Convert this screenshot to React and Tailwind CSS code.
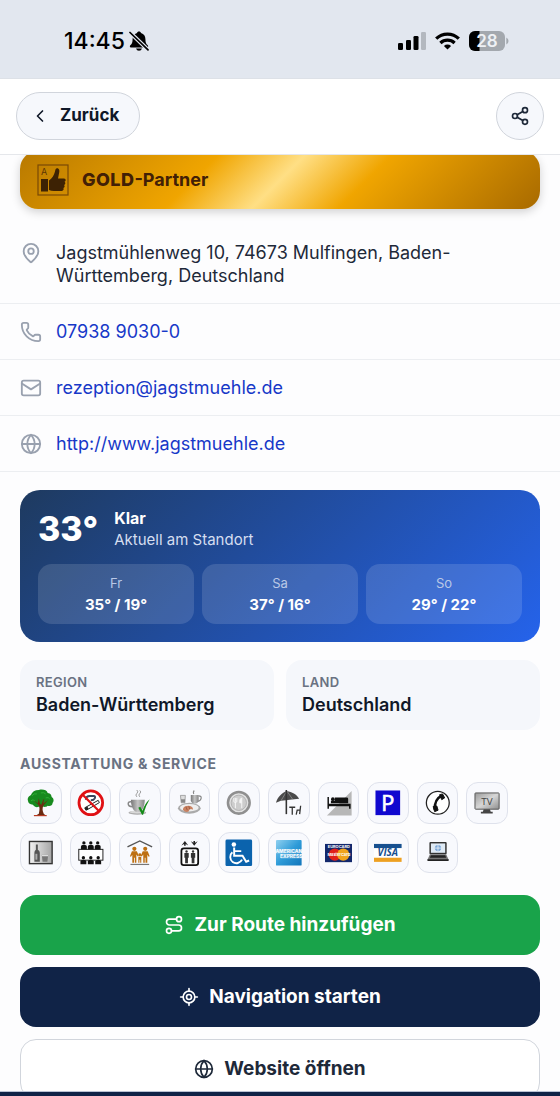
import React from 'react';
import { ChevronLeft, Globe, LocateFixed, MapPin, Phone, Route, Share2 } from 'lucide-react';

function MailIcon({ className }) {
  return (
    <svg viewBox="0 0 24 24" fill="none" stroke="currentColor" strokeWidth="2" strokeLinecap="round" strokeLinejoin="round" className={className} aria-hidden="true">
      <rect x="2" y="4" width="20" height="16" rx="2" />
      <path d="m22 7-10 6.5L2 7" />
    </svg>
  );
}

const contacts = [
  { icon: MapPin, text: 'Jagstmühlenweg 10, 74673 Mulfingen, Baden-Württemberg, Deutschland' },
  { icon: Phone, text: '07938 9030-0', href: 'tel:+49793890300' },
  { icon: MailIcon, text: 'rezeption@jagstmuehle.de', href: 'mailto:rezeption@jagstmuehle.de' },
  { icon: Globe, text: 'http://www.jagstmuehle.de', href: 'http://www.jagstmuehle.de' },
];

const forecast = [
  { day: 'Fr', temp: '35° / 19°' },
  { day: 'Sa', temp: '37° / 16°' },
  { day: 'So', temp: '29° / 22°' },
];

const facts = [
  { label: 'Region', value: 'Baden-Württemberg' },
  { label: 'Land', value: 'Deutschland' },
];

function Person({ x, y, color = '#111' }) {
  return (
    <g transform={`translate(${x} ${y})`} fill={color}>
      <circle cx="0" cy="0" r="1.7" />
      <path d="M-3 6.6V3.8Q-3 2.200 -1.4 2.200H1.4Q3 2.200 3 3.8V6.6Z" />
    </g>
  );
}

const amenities = [
  {
    name: 'Garten',
    art: (
      <>
        <path d="M1 12C0 9 2 7 4 6 5 3 8 1 12 1c4-1 8 0 9 3 3 0 4 3 4 4 3 2 2 5 1 6 0 3-3 4-5 3-2 2-5 1-7 0-3 2-6 2-8-1-3 0-5-2-5-4Z" fill="#178a1e" />
        <path d="M5 7q2-3 5-2M14 4q3-1 5 1M19 9q3-1 4 1M4 12q2-2 4 0" stroke="#2fae35" fill="none" />
        <path d="M12 25c1-4 1-7-.5-9L6 11l5 3.5 1-5 1.200 5.500 1.300 1 2-5 1-1-1 5 5-4-5 6c-1 3-1 5 .5 8l2 1.800H9Z" fill="#6b2b12" />
        <path d="M7 27h13" stroke="#b63a22" strokeWidth="1.200" />
      </>
    ),
  },
  {
    name: 'Nichtraucher',
    art: (
      <>
        <circle cx="14" cy="14" r="12" fill="#fff" />
        <path d="M9 11q0-4 4-4h4q2 0 1 2.500-1 2-4 2" stroke="#39445a" strokeWidth="2" fill="none" />
        <path d="m8 19 13.500-7.500 1.200 2.300L9.500 21.500Z" fill="#fff" stroke="#222" strokeWidth="1" />
        <path d="m7.500 19.500 3-1.800 1.200 2.300-2.800 1.700Z" fill="#222" />
        <circle cx="14" cy="14" r="12" fill="none" stroke="#e01014" strokeWidth="2.800" />
        <path d="m5.500 5.500 17 17" stroke="#e01014" strokeWidth="2.200" />
      </>
    ),
  },
  {
    name: 'Café',
    art: (
      <>
        <path d="M11 8Q9 6 11 4.500T11 1M14 8q-2-2 0-3.500T14 1.500" stroke="#999" fill="none" />
        <ellipse cx="11.500" cy="24" rx="9" ry="2" fill="#aaa" />
        <ellipse cx="11.500" cy="23.300" rx="8" ry="1.500" fill="#d8d8d8" />
        <path d="M5 11h14c0 6-2 11-5 12h-4c-3-1-5-6-5-12Z" fill="url(#metal)" />
        <path d="M5.500 13C1 12 1 18 6.500 18" stroke="#888" strokeWidth="1.500" fill="none" />
        <path d="m12.500 19 2-1 2.200 4Q19 15 24 10.500 20 17 17.300 26h-1Z" fill="#138a17" />
      </>
    ),
  },
  {
    name: 'Frühstück',
    art: (
      <>
        <ellipse cx="13.500" cy="19.500" rx="11.500" ry="5.500" fill="#aaa" />
        <ellipse cx="13.500" cy="19" rx="9.500" ry="3.800" fill="#eee" />
        <path d="M4.500 6.500h5l-.5 7.500H5.300Z" fill="#ddd" stroke="#888" strokeWidth=".7" />
        <path d="M5 10.500h4.200v3.300H5.300Z" fill="#888" />
        <path d="M15 6h8v6q-1 3-4 3t-4-3Z" fill="url(#metal)" />
        <path d="M23 7q3 0 2.500 2.500T22 12.500M18 5q-1-2 .5-3.500" stroke="#888" fill="none" strokeWidth="1.200" />
        <path d="M7 21q0-4 6-4 5 1 4 4-3-2-4 1.500-3 2-6-1.500Z" fill="#c98262" />
        <path d="m10 18 1.500 3.500M13 17.500l1 3" stroke="#8e4b33" strokeWidth=".7" />
      </>
    ),
  },
  {
    name: 'Restaurant',
    art: (
      <>
        <circle cx="14" cy="14" r="11" fill="#e2e2e2" stroke="#8f8f8f" strokeWidth="2.600" />
        <circle cx="14" cy="14" r="7.800" fill="#cdcdcd" stroke="#aaa" strokeWidth=".8" />
        <path d="M10.500 9v4M12 9v4M9 9v4q1.500 1.500 3 0M10.500 13v6.500" stroke="#f6f6f6" fill="none" />
        <path d="M17 19.500V9q-2.500 1-2 5h2" stroke="#f6f6f6" fill="#f6f6f6" />
      </>
    ),
  },
  {
    name: 'Terrasse',
    art: (
      <>
        <path d="M12 2C7 4 2.500 8 1 14l5-2 5-.5 6-.8 7.500-.7C22 5 17 3 12 2Z" fill="#4b4b4b" />
        <path d="M12 2 6 12M12 2l-.5 9.500M12 2l6 8.500" stroke="#999" strokeWidth=".7" />
        <path d="M11.500 1v24.500" stroke="#333" strokeWidth="1.600" />
        <path d="M14.500 18.500h6M17.500 18.500V26M26 17l-1 8.500M21.500 26l1-4.500h3.200" stroke="#333" strokeWidth="1.300" fill="none" />
      </>
    ),
  },
  {
    name: 'Übernachtung',
    art: (
      <>
        <path d="M27 2v25H2Z" fill="#b7b7b7" />
        <path d="M2.500 8H4v7h22v5h-1.600v-2.500H4V20H2.500Z" fill="#111" />
        <path d="M10 8.500h12q1.500 0 1.500 1.500v4.500H6V12h4Z" fill="#111" />
        <circle cx="8" cy="10.300" r="1.900" fill="#111" />
      </>
    ),
  },
  {
    name: 'Parkplatz',
    art: (
      <>
        <rect x="1.500" y="1.500" width="25" height="25" fill="#1008cf" />
        <text x="14" y="22" textAnchor="middle" fontSize="22" fill="#fff" stroke="#fff" strokeWidth=".7" className="font-['Open_Sans',sans-serif]">P</text>
      </>
    ),
  },
  {
    name: 'Telefon',
    art: (
      <>
        <circle cx="14" cy="14" r="11.600" fill="#fff" stroke="#222" strokeWidth="1.300" />
        <path d="M17.500 7Q10.500 10.500 11 21" stroke="#111" strokeWidth="2.600" fill="none" />
        <path d="m15.800 5.800 3-.8 2.200 4-3 1.800ZM9.300 17.800l3.700-.6 1.300 4.300-3.500 1.500Z" fill="#111" stroke="#111" strokeLinejoin="round" />
      </>
    ),
  },
  {
    name: 'Fernseher',
    art: (
      <>
        <path d="M11 20h6l1 3h2v1.800H8V23h2Z" fill="#444" />
        <rect x="2" y="4" width="24.500" height="16.500" rx=".7" fill="url(#metalLight)" stroke="#555" />
        <text x="14.200" y="16" textAnchor="middle" fontSize="10" fill="#444" className="font-['Open_Sans',sans-serif]">TV</text>
      </>
    ),
  },
  {
    name: 'Minibar',
    art: (
      <>
        <rect x="2.500" y="2.500" width="23" height="22.500" fill="url(#metalSoft)" stroke="#333" strokeWidth="1.400" />
        <path d="M9 5.500h2V11q2 1 2 3v9H7.500v-9q0-2 1.500-3Z" fill="#555" />
        <path d="M8.500 15h2v6h-2Z" fill="#aaa" />
        <path d="M15 16h6.500l-.8 7h-4.900Z" fill="#777" />
        <path d="M15 16h6.500l-.2 1.500h-6Z" fill="#ddd" />
      </>
    ),
  },
  {
    name: 'Tagungsraum',
    art: (
      <>
        <rect x="1.800" y="10.500" width="24.500" height="11" fill="#fff" stroke="#222" />
        <Person x={7} y={4} />
        <Person x={14} y={4} />
        <Person x={21} y={4} />
        <Person x={6.500} y={19} />
        <Person x={14} y={19} />
        <Person x={21.500} y={19} />
      </>
    ),
  },
  {
    name: 'Familien',
    art: (
      <>
        <path d="M1.500 8 14 2l12.500 6" stroke="#555" strokeWidth="1.400" fill="none" />
        <g fill="#bd6f12">
          <circle cx="8.500" cy="10" r="2.100" />
          <path d="M6 12.500h5l2 4.500-1 .8-1.500-2V24H9v-5h-.8v5H6.400v-8l-1.400 2-1-.5Z" />
          <circle cx="19.500" cy="10" r="2.100" />
          <path d="M17 12.500h5l2 5-1 .5-1.400-2V24h-1.800v-5H19v5h-1.500v-8.200l-1.500 2-1-.8Z" />
          <circle cx="14" cy="16" r="1.500" />
          <path d="M12.500 18h3v6h-1.100v-3h-.8v3h-1.100Z" />
        </g>
        <path d="M4.500 25.800h19" stroke="#777" strokeWidth="1.200" />
      </>
    ),
  },
  {
    name: 'Aufzug',
    art: (
      <>
        <path d="m9 2 3.500 4.500L9.800 5v1.800H8.200V5L5.500 6.500ZM18.500 6.800 15 2.300l2.700 1.500V2h1.600v1.800L22 2.300Z" fill="#222" />
        <rect x="5.500" y="9.500" width="17" height="17" rx="2.500" fill="#fff" stroke="#111" strokeWidth="1.800" />
        <g fill="#333">
          <circle cx="10.700" cy="12.700" r="1.200" />
          <path d="M8.500 14.300h4.400V19h-.8v5.500H9.300V19h-.8Z" />
          <circle cx="17.300" cy="12.700" r="1.200" />
          <path d="M15.100 14.300h4.400V19h-.8v5.500h-2.800V19h-.8Z" />
        </g>
      </>
    ),
  },
  {
    name: 'Barrierefrei',
    art: (
      <>
        <rect x=".5" y=".5" width="27" height="27" rx="1.500" fill="#0b63ad" />
        <circle cx="9" cy="5.500" r="2.300" fill="#fff" />
        <path d="M9.300 8.500v8.500h8.500l3.700 6 3-1.200M9.500 12.300h7" stroke="#fff" strokeWidth="2" fill="none" />
        <path d="M7.500 13.500a6.300 6.300 0 1 0 9.800 7.500" stroke="#fff" strokeWidth="1.900" fill="none" />
      </>
    ),
  },
  {
    name: 'American Express',
    art: (
      <>
        <rect x="1" y="1" width="26" height="26" rx="1" fill="url(#amex)" />
        <path d="M1 10.500h26v4.300H1ZM6 15.300h21v4.400H6Z" fill="#fff" fillOpacity=".25" />
        <text x="14" y="14.600" textAnchor="middle" fontSize="5" fill="#fff" className="font-['Inter',sans-serif] font-bold">AMERICAN</text>
        <text x="16.500" y="19.400" textAnchor="middle" fontSize="5" fill="#fff" className="font-['Inter',sans-serif] font-bold">EXPRESS</text>
      </>
    ),
  },
  {
    name: 'Eurocard Mastercard',
    art: (
      <>
        <rect x="0" y="5" width="28" height="18.500" fill="#12276b" />
        <text x="14" y="9" textAnchor="middle" fontSize="4" fill="#fff" className="font-['Inter',sans-serif] font-bold">EUROCARD</text>
        <circle cx="10" cy="15.800" r="6.200" fill="#e0211b" />
        <circle cx="18.500" cy="15.800" r="6.200" fill="#f0a41c" />
        <text x="14" y="17.500" textAnchor="middle" fontSize="4" fill="#fff" className="font-['Inter',sans-serif] font-bold">MasterCard</text>
      </>
    ),
  },
  {
    name: 'Visa',
    art: (
      <>
        <rect x="0" y="5" width="28" height="18" fill="#fff" />
        <rect x="0" y="5" width="28" height="4.200" fill="#17508f" />
        <rect x="0" y="19" width="28" height="4.200" fill="#eda021" />
        <text x="14" y="17.700" textAnchor="middle" fontSize="10" fill="#17508f" className="font-['Open_Sans',sans-serif] font-bold italic">VISA</text>
      </>
    ),
  },
  {
    name: 'Internet',
    art: (
      <>
        <rect x="5.500" y="3" width="17.500" height="12.500" rx="1" fill="#333" />
        <rect x="7" y="4.500" width="14.500" height="9.500" fill="#dfeaf5" />
        <circle cx="14.200" cy="9.200" r="3.200" fill="#7ba6d6" />
        <path d="M14.200 6v6.400M11 9.200h6.400" stroke="#fff" strokeWidth=".7" />
        <path d="M6 15.500h16.500l2.500 5.500H3.500Z" fill="#777" />
        <path d="M7 16.500h14.500l1 2.500H6Z" fill="#222" />
        <path d="M3.500 20.500H25v1.800H3.500Z" fill="#222" />
      </>
    ),
  },
];

function Gradients() {
  return (
    <svg className="absolute size-0" aria-hidden="true">
      <defs>
        <linearGradient id="metal">
          <stop offset="0" stopColor="#777" />
          <stop offset=".5" stopColor="#c4c4c4" />
          <stop offset="1" stopColor="#858585" />
        </linearGradient>
        <linearGradient id="metalLight" x1="0" y1="0" x2="1" y2="1">
          <stop offset="0" stopColor="#9a9a9a" />
          <stop offset=".5" stopColor="#d6d6d6" />
          <stop offset="1" stopColor="#8d8d8d" />
        </linearGradient>
        <linearGradient id="metalSoft">
          <stop offset="0" stopColor="#f3f3f3" />
          <stop offset="1" stopColor="#a5a5a5" />
        </linearGradient>
        <linearGradient id="amex" x1="0" y1="0" x2="1" y2="1">
          <stop offset="0" stopColor="#8fd0f0" />
          <stop offset=".5" stopColor="#2e9bd8" />
          <stop offset="1" stopColor="#1275bb" />
        </linearGradient>
      </defs>
    </svg>
  );
}

function StatusBar() {
  return (
    <div className="flex h-[79px] shrink-0 items-center justify-between border-b border-[#dde1e7] bg-[#e2e7ef] pt-1 pr-[51px] pl-16 text-black">
      <div className="flex items-center gap-1">
        <span className="text-[23px] leading-6 font-medium">14:45</span>
        <svg viewBox="0 0 20 20" className="size-5" aria-hidden="true">
          <path d="M10 .5c-1.100 0-1.900.6-2 1.500C5 3 3.600 5.300 3.600 8c0 3.500-.7 4.800-2.300 6.300-.8.900-.5 2.100.6 2.100h16.200c1.100 0 1.400-1.200.6-2.100-1.600-1.500-2.300-2.800-2.300-6.300 0-2.700-1.400-5-4.400-6-.1-.9-.9-1.500-2-1.500ZM7 17.400h6q-.7 2.300-3 2.300t-3-2.300Z" />
          <path d="m1 1.500 18 17.300" stroke="#e2e7ef" strokeWidth="4" />
          <path d="m1 1.500 18 17.300" stroke="#000" strokeWidth="1.700" strokeLinecap="round" />
        </svg>
      </div>
      <div className="flex items-center gap-[9px]">
        <svg viewBox="0 0 28 18" className="h-[18px] w-7" aria-hidden="true">
          <rect x="0" y="11" width="5" height="7" rx="1.300" />
          <rect x="8" y="8" width="5" height="10" rx="1.300" />
          <rect x="15.500" y="4" width="5" height="14" rx="1.300" />
          <rect x="23" y="0" width="5" height="18" rx="1.300" fill="#b3b8bf" />
        </svg>
        <svg viewBox="0 0 25 18" className="h-[18px] w-[25px]" fill="none" stroke="#000" strokeWidth="3.200" aria-hidden="true">
          <path d="M1.200 6.700a16 16 0 0 1 22.600 0" />
          <path d="M5.400 11a10.200 10.200 0 0 1 14.200 0" />
          <path d="m12.500 17.600-3.600-3.600a5.200 5.200 0 0 1 7.200 0Z" fill="#000" stroke="none" />
        </svg>
        <svg viewBox="0 0 40 20" className="h-5 w-10" aria-hidden="true">
          <rect x="0" y="0" width="36" height="20" rx="6" fill="#a3a8ae" />
          <path d="M10.500 0v20H6a6 6 0 0 1-6-6V6a6 6 0 0 1 6-6Z" />
          <path d="M37.300 6.500q2.200 1 2.200 3.500t-2.200 3.500Z" fill="#a3a8ae" />
          <text x="18" y="16" textAnchor="middle" fontSize="17" fill="#eef1f5" className="font-semibold">28</text>
        </svg>
      </div>
    </div>
  );
}

function Header() {
  return (
    <header className="flex shrink-0 items-center justify-between border-b border-gray-200 bg-white px-4 pt-[13px] pb-[14px]">
      <button type="button" className="flex h-12 items-center gap-[10px] rounded-full border border-gray-300 bg-[#f6f8fc] pr-5 pl-[13px] text-[17px] font-bold text-gray-900">
        <ChevronLeft className="size-5" />
        Zurück
      </button>
      <button type="button" aria-label="Teilen" className="flex size-12 items-center justify-center rounded-full border border-gray-300 bg-[#f6f8fc] text-gray-800">
        <Share2 className="size-5" />
      </button>
    </header>
  );
}

function PartnerBanner() {
  return (
    <div className="mx-5 -mt-1 flex h-[58px] items-center gap-3 rounded-[18px] bg-[linear-gradient(135deg,#b87900_0%,#f0a500_35%,#ffdf85_50%,#f0a500_65%,#a86a00_100%)] px-4 text-[#422006] shadow-[0_3px_10px_rgba(0,0,0,0.18)]">
      <svg viewBox="0 0 34 34" className="size-[34px]" aria-hidden="true">
        <rect x="2" y="2" width="30" height="30" fill="none" stroke="#7a4a05" strokeWidth="1.200" />
        <text x="5" y="12" fontSize="9" fill="#5c3605">A</text>
        <rect x="5" y="16" width="7" height="12.500" fill="#3d2204" />
        <path d="M13 17.500c3-2 5-5 6-9 .4-2.500 1-3.300 2-3.300 2.300 0 2.800 2.300 2 5.300l-1 5h6q1.800.2 1.700 1.800-.2 1.200-1.200 1.500 1 .6.800 1.800-.3 1.200-1.300 1.500.8.600.6 1.700-.3 1-1.300 1.300.6.600.3 1.500-.4 1.400-2 1.400H18q-3 0-5-1Z" fill="#3d2204" />
      </svg>
      <p className="text-lg font-bold">
        <strong className="font-extrabold tracking-wide">GOLD</strong>-Partner
      </p>
    </div>
  );
}

function ContactList() {
  return (
    <ul className="mt-4">
      {contacts.map(({ icon: Icon, text, href }) => (
        <li key={text} className="flex items-start gap-[14px] border-b border-[#eceef1] px-5 py-4 text-lg leading-[23px]">
          <Icon className="mt-px size-[22px] shrink-0 text-gray-400" />
          {href ? <a href={href} className="text-[#1738c8]">{text}</a> : <span className="max-w-[420px] text-gray-800">{text}</span>}
        </li>
      ))}
    </ul>
  );
}

function Weather() {
  return (
    <section className="mx-5 mt-[18px] rounded-[20px] bg-[linear-gradient(135deg,#1e3a5f_0%,#2563eb_100%)] p-[18px] text-white">
      <div className="flex items-center gap-4">
        <span className="text-[34px] leading-10 font-extrabold">33°</span>
        <div>
          <p className="text-base leading-[21px] font-bold">Klar</p>
          <p className="text-[15px] leading-[21px] text-[#d5def0]">Aktuell am Standort</p>
        </div>
      </div>
      <div className="mt-[14px] grid grid-cols-3 gap-2">
        {forecast.map((f) => (
          <div key={f.day} className="rounded-[14px] bg-white/13 py-2 text-center">
            <p className="text-[13px] leading-[22px] text-[#b9c8e6]">{f.day}</p>
            <p className="text-[15px] leading-[22px] font-bold">{f.temp}</p>
          </div>
        ))}
      </div>
    </section>
  );
}

function Facts() {
  return (
    <dl className="mx-5 mt-[18px] grid grid-cols-2 gap-3">
      {facts.map((f) => (
        <div key={f.label} className="rounded-2xl bg-[#f5f7fb] px-4 py-3">
          <dt className="text-[13px] leading-5 font-semibold tracking-wide text-gray-500 uppercase">{f.label}</dt>
          <dd className="text-lg leading-[26px] font-semibold text-gray-900">{f.value}</dd>
        </div>
      ))}
    </dl>
  );
}

function Amenities() {
  return (
    <section className="mx-5 mt-6">
      <h2 className="text-sm leading-5 font-bold tracking-wider text-gray-500 uppercase">Ausstattung &amp; Service</h2>
      <ul className="mt-2 grid grid-cols-10 gap-2 pr-8">
        {amenities.map((a) => (
          <li key={a.name} className="flex aspect-square items-center justify-center rounded-xl border border-[#dfe2ec] bg-[#f8f9fd] p-[6px]">
            <svg viewBox="0 0 28 28" role="img" aria-label={a.name} className="w-full">
              {a.art}
            </svg>
          </li>
        ))}
      </ul>
    </section>
  );
}

function Actions() {
  return (
    <div className="mx-5 mt-[22px] flex flex-col gap-3 pb-5 text-[19px] font-bold">
      <button type="button" className="flex h-[60px] items-center justify-center gap-[10px] rounded-2xl bg-[#19a34a] text-white">
        <Route className="size-5" />
        Zur Route hinzufügen
      </button>
      <button type="button" className="flex h-[60px] items-center justify-center gap-[10px] rounded-2xl bg-[#102347] text-white">
        <LocateFixed className="size-5" />
        Navigation starten
      </button>
      <a href="http://www.jagstmuehle.de" className="flex h-[60px] items-center justify-center gap-[10px] rounded-2xl border border-gray-300 bg-white text-gray-800">
        <Globe className="size-5" />
        Website öffnen
      </a>
    </div>
  );
}

export default function App() {
  return (
    <div className="flex h-screen flex-col bg-[#fdfdfe] font-['Inter',sans-serif]">
      <Gradients />
      <StatusBar />
      <Header />
      <main className="min-h-0 flex-1 overflow-y-auto [scrollbar-width:none]">
        <PartnerBanner />
        <ContactList />
        <Weather />
        <Facts />
        <Amenities />
        <Actions />
      </main>
      <div className="h-[5px] shrink-0 border-t border-[#b9c2d3] bg-[#102347]" />
    </div>
  );
}
